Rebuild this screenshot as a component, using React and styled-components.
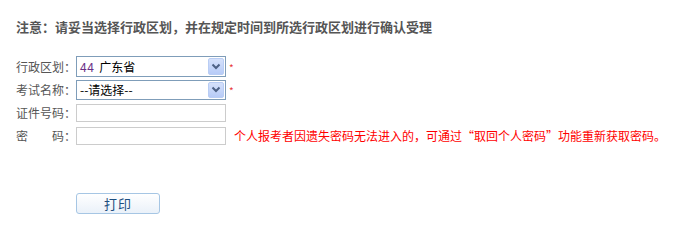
import React from 'react'
import styled, { createGlobalStyle } from 'styled-components'

const GlobalStyle = createGlobalStyle`
  body {
    margin: 0;
    background: #fff;
    font-family: "Noto Sans CJK SC", "Liberation Sans", sans-serif;
    font-size: 12px;
  }
`

const Page = styled.div`
  padding: 19px 0 0 16px;
  width: 661px;
  height: 224px;
`

const Notice = styled.div`
  font-size: 13px;
  font-weight: bold;
  color: #555;
  line-height: 16px;
`

const Form = styled.div`
  margin-top: 20px;
  display: grid;
  grid-template-columns: 60px auto;
  grid-auto-rows: 23px;
  justify-content: start;
`

const Label = styled.div`
  display: flex;
  align-items: center;
  color: #555;
  white-space: pre;
`

const Field = styled.div`
  display: flex;
  align-items: center;
`

const SelectBox = styled.div`
  box-sizing: border-box;
  width: 150px;
  height: ${p => p.$h}px;
  border: 1px solid #7f9db9;
  display: flex;
  align-items: stretch;
  padding: 1px;
  color: #000;
  background: #fff;
`

const SelectText = styled.div`
  flex: 1;
  display: flex;
  align-items: center;
  padding-left: 2px;
  font-size: 12px;
`

const Code = styled.span`
  color: #6a2f86;
  margin-right: 5px;
  letter-spacing: 0.5px;
`

const ArrowBtn = styled.div`
  width: 16px;
  border-radius: 2px;
  background: linear-gradient(#d5e1fb, #b7cbf7);
  border: 1px solid #b9cdf4;
  box-sizing: border-box;
  display: flex;
  align-items: center;
  justify-content: center;
`

const Star = styled.span`
  color: #e8393b;
  font-size: 10px;
  line-height: 10px;
  margin-left: 3px;
  padding-top: 3px;
`

const TextInput = styled.input`
  box-sizing: border-box;
  width: 150px;
  height: 18px;
  border: 1px solid #cccccc;
  padding: 0 2px;
  outline: none;
`

const Hint = styled.span`
  color: #f00;
  margin-left: 8px;
  white-space: nowrap;
`

const PrintButton = styled.button`
  margin: 46px 0 0 60px;
  width: 84px;
  height: 21px;
  border: 1px solid #a6c6e4;
  border-radius: 3px;
  background: linear-gradient(#ffffff, #eaf1f9);
  color: #1d4e7f;
  font-family: "Noto Sans CJK SC", sans-serif;
  font-size: 13px;
  letter-spacing: 1px;
  padding: 0;
  line-height: 19px;
`

const Arrow = () => (
  <svg width="10" height="7" viewBox="0 0 10 7">
    <path d="M1.5 1.5 L5 5 L8.5 1.5" fill="none" stroke="#4d6185" strokeWidth="2" />
  </svg>
)

const Select = ({ h, children }) => (
  <SelectBox $h={h}>
    <SelectText>{children}</SelectText>
    <ArrowBtn><Arrow /></ArrowBtn>
  </SelectBox>
)

export default function App() {
  return (
    <Page>
      <GlobalStyle />
      <Notice>注意：请妥当选择行政区划，并在规定时间到所选行政区划进行确认受理</Notice>
      <Form>
        <Label>行政区划：</Label>
        <Field>
          <Select h={21}><Code>44</Code>广东省</Select>
          <Star>*</Star>
        </Field>
        <Label>考试名称：</Label>
        <Field>
          <Select h={20}>--请选择--</Select>
          <Star>*</Star>
        </Field>
        <Label>证件号码：</Label>
        <Field>
          <TextInput type="text" />
        </Field>
        <Label>密　　码：</Label>
        <Field>
          <TextInput type="password" />
          <Hint>个人报考者因遗失密码无法进入的，可通过“取回个人密码”功能重新获取密码。</Hint>
        </Field>
      </Form>
      <PrintButton>打印</PrintButton>
    </Page>
  )
}
